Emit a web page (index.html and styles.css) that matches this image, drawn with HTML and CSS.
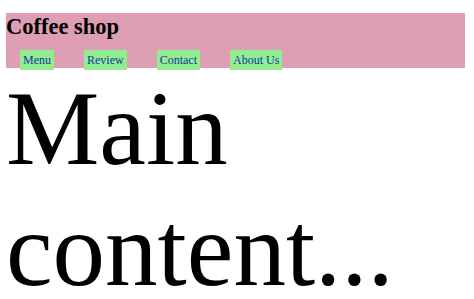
FILE: index.html
```
<!DOCTYPE html>
<html lang="en">
<head>
    <meta charset="UTF-8">
    <meta name="viewport" content="width=device-width, initial-scale=1.0">
    <title>Coffee shop</title>
    <link rel="stylesheet" href="styles.css">
</head>
<body>
    <header class="top">
        <h1>Coffee shop</h1>
        <ul class="nav">
            <li><a href="#">Menu</a></li>
            <li><a href="#">Review</a></li>
            <li><a href="#">Contact</a></li>
            <li><a href="#">About Us</a></li>
        </ul>
    </header>
    <div class="main">Main content...</div>
</body>
</html>
```
FILE: styles.css
```
*{margin:0;padding:0}
body{
    margin:0 6px;
    font-family:"Liberation Serif", "Times New Roman", serif;
    background-color:white;
}
.top{
    background-color:#de9fb4;
    margin:13px 3px 0 0;
    padding:1px 0 0 0;
}
.top h1{
    font-size:22.5px;
    font-weight:bold;
    color:black;
}
.nav{
    list-style:none;
    margin-top:13px;
    padding-left:14px;
    font-size:12px;
}
.nav li{
    display:inline;
    margin-right:27px;
}
.nav a{
    background-color:#90ee90;
    color:#1a33a0;
    text-decoration:none;
    padding:3px 3px;
}
.main{
    font-size:105px;
    color:black;
}
```
